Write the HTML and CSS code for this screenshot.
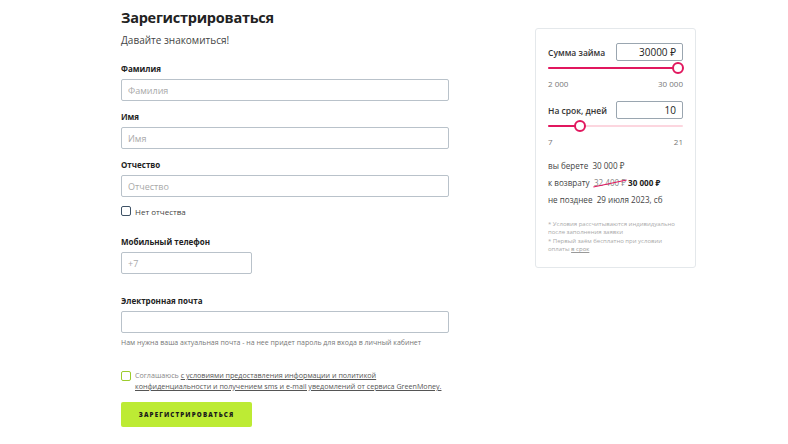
FILE: index.html
```html
<!DOCTYPE html>
<html lang="ru">
<head>
<meta charset="utf-8">
<link rel="stylesheet" href="styles.css">
</head>
<body>
<div class="page">
  <form class="form">
    <h1 class="title">Зарегистрироваться</h1>
    <p class="subtitle">Давайте знакомиться!</p>

    <div class="field field-first">
      <label class="label">Фамилия</label>
      <input class="input" placeholder="Фамилия">
    </div>
    <div class="field">
      <label class="label">Имя</label>
      <input class="input" placeholder="Имя">
    </div>
    <div class="field">
      <label class="label">Отчество</label>
      <input class="input" placeholder="Отчество">
    </div>
    <label class="check">
      <span class="box"></span>
      <span>Нет отчества</span>
    </label>

    <div class="field field-phone">
      <label class="label">Мобильный телефон</label>
      <input class="input input-short" placeholder="+7">
    </div>
    <div class="field field-email">
      <label class="label">Электронная почта</label>
      <input class="input">
      <p class="hint">Нам нужна ваша актуальная почта - на нее придет пароль для входа в личный кабинет</p>
    </div>

    <label class="agree">
      <span class="box box-green"></span>
      <span class="agree-text">Соглашаюсь <a href="#">с условиями предоставления информации и политикой конфиденциальности и получением sms и e-mail уведомлений от сервиса GreenMoney.</a></span>
    </label>

    <button type="button" class="submit">Зарегистрироваться</button>
  </form>

  <aside class="calc">
    <div class="calc-row">
      <span class="calc-label">Сумма займа</span>
      <span class="calc-input">30000 ₽</span>
    </div>
    <div class="slider">
      <div class="track"></div>
      <div class="fill" style="width:96%"></div>
      <div class="thumb" style="left:96%"></div>
    </div>
    <div class="range"><span>2 000</span><span>30 000</span></div>

    <div class="calc-row calc-row-2">
      <span class="calc-label">На срок, дней</span>
      <span class="calc-input">10</span>
    </div>
    <div class="slider">
      <div class="track"></div>
      <div class="fill" style="width:23.5%"></div>
      <div class="thumb" style="left:23.5%"></div>
    </div>
    <div class="range"><span>7</span><span>21</span></div>

    <div class="summary">
      <p>вы берете&nbsp; 30 000 ₽</p>
      <p>к возврату&nbsp; <span class="old">32 400 ₽</span> <b>30 000 ₽</b></p>
      <p>не позднее&nbsp; 29 июля 2023, сб</p>
    </div>

    <div class="notes">
      <p>* Условия рассчитываются индивидуально после заполнения заявки</p>
      <p>* Первый заём бесплатно при условии оплаты <a href="#">в срок</a></p>
    </div>
  </aside>
</div>
</body>
</html>
```

FILE: styles.css
```css
* { box-sizing: border-box; }
html, body { margin: 0; padding: 0; background: #fff; }
body {
  font-family: "Open Sans", "Noto Sans", sans-serif;
  color: #333;
}
.page {
  display: flex;
  align-items: flex-start;
  gap: 86px;
  padding: 7px 0 0 121px;
}
.form {
  width: 328px;
  display: flex;
  flex-direction: column;
}
.title {
  margin: 0;
  font-size: 14.5px;
  line-height: 22px;
  font-weight: 700;
  letter-spacing: -0.25px;
  color: #222;
}
.subtitle {
  margin: 3px 0 0;
  font-size: 10px;
  line-height: 16px;
  color: #444;
}
.field {
  display: flex;
  flex-direction: column;
  margin-top: 10px;
}
.field-first { margin-top: 15px; }
.label {
  font-size: 8px;
  line-height: 12px;
  font-weight: 700;
  color: #222;
  margin-bottom: 4px;
}
.input {
  height: 22px;
  width: 100%;
  border: 1px solid #b9c2ca;
  border-radius: 2px;
  padding: 0 6px;
  font-family: inherit;
  font-size: 9px;
  color: #333;
  outline: none;
}
.input::placeholder { color: #a9a9a9; }
.input-short { width: 131px; }
.check {
  display: flex;
  align-items: center;
  gap: 4px;
  margin-top: 8px;
  height: 12px;
  font-size: 8px;
  color: #444;
}
.box {
  width: 10px;
  height: 10px;
  border: 1px solid #3e5266;
  border-radius: 2px;
  flex: none;
}
.box-green { border-color: #9ccc2d; margin-top: 1px; }
.field.field-phone { margin-top: 19px; }
.field.field-email { margin-top: 21px; }
.hint {
  margin: 5px 0 0;
  font-size: 7px;
  line-height: 10px;
  color: #777;
}
.agree {
  display: flex;
  align-items: flex-start;
  gap: 4px;
  margin-top: 22px;
}
.agree-text {
  flex: 1;
  font-size: 7.15px;
  line-height: 11px;
  color: #888;
}
.agree-text a { color: #555; text-decoration: underline; }
.submit {
  margin-top: 10px;
  width: 131px;
  height: 25px;
  border: none;
  border-radius: 2px;
  background: #bdeb34;
  color: #1a1a1a;
  font-family: inherit;
  font-size: 6.2px;
  font-weight: 800;
  letter-spacing: 1.15px;
  text-transform: uppercase;
  padding: 0;
}

.calc {
  margin-top: 21px;
  width: 161px;
  border: 1px solid #e4e8eb;
  border-radius: 3px;
  padding: 14px 12px 13px 12px;
}
.calc-row {
  display: flex;
  justify-content: space-between;
  align-items: center;
}
.calc-row-2 { margin-top: 12px; }
.calc-label {
  font-size: 8.5px;
  color: #333;
  font-weight: 600;
}
.calc-input {
  width: 67px;
  height: 18px;
  border: 1px solid #9aa6b0;
  border-radius: 2px;
  font-size: 10px;
  line-height: 16px;
  text-align: right;
  padding-right: 6px;
  color: #222;
}
.slider {
  position: relative;
  height: 14px;
}
.track {
  position: absolute;
  left: 0; right: 0; top: 6px;
  height: 2px;
  background: #fcd6df;
  border-radius: 1px;
}
.fill {
  position: absolute;
  left: 0; top: 6px;
  height: 2px;
  background: #e1175e;
  border-radius: 1px;
}
.thumb {
  position: absolute;
  top: 1px;
  width: 12px;
  height: 12px;
  margin-left: -6px;
  border-radius: 50%;
  background: #fff;
  border: 2px solid #e1175e;
}
.range {
  display: flex;
  justify-content: space-between;
  font-size: 8px;
  color: #777;
  margin-top: 3px;
}
.summary {
  margin-top: 12px;
}
.summary p {
  margin: 0 0 4px;
  font-size: 8.1px;
  line-height: 13px;
  color: #444;
}
.summary b { color: #222; font-weight: 700; }
.old {
  position: relative;
  color: #888;
}
.old::after {
  content: "";
  position: absolute;
  left: -1px;
  right: -1px;
  top: 50%;
  height: 1px;
  background: #e1175e;
  transform: rotate(-12deg);
}
.notes { margin-top: 14px; }
.notes p {
  margin: 0;
  font-size: 6px;
  line-height: 8.4px;
  color: #aaa;
}
.notes a { color: #999; text-decoration: underline; }
```
